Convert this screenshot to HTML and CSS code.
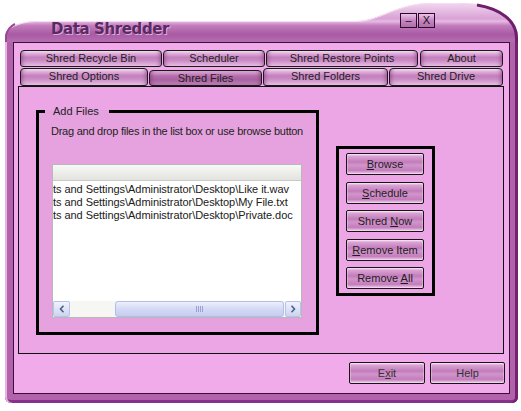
FILE: index.html
```html
<!DOCTYPE html>
<html>
<head>
<meta charset="utf-8">
<title>Data Shredder</title>
<link rel="stylesheet" href="styles.css">
</head>
<body>
<div class="window">
  <div class="titlebar">
    <svg class="title-shape" width="513" height="42" viewBox="0 0 513 42">
      <defs>
        <linearGradient id="tg" x1="0" y1="3" x2="0" y2="42" gradientUnits="userSpaceOnUse">
          <stop offset="0" stop-color="#f2d6f0"/>
          <stop offset="0.4" stop-color="#d9a2d5"/>
          <stop offset="0.47" stop-color="#e7b9e3"/>
          <stop offset="0.58" stop-color="#c27cbc"/>
          <stop offset="0.8" stop-color="#a95aa4"/>
          <stop offset="1" stop-color="#b56eb0"/>
        </linearGradient>
      </defs>
      <path d="M0,42 L0,37 C0,28 14,21 34,21 L352,21 C374,21 392,3 426,3 L456,3 C490,3 513,16 513,38 L513,42 Z" fill="url(#tg)"/>
      <path d="M0.5,37 C0.5,28 14,21.5 34,21.5 L352,21.5 C374,21.5 392,3.5 426,3.5 L456,3.5" fill="none" stroke="#f6dcf4" stroke-width="1"/>
      <path d="M472,5 C496,9 511.5,21 511.5,38 L511.5,42" fill="none" stroke="#6e1f6c" stroke-width="3"/>
      <path d="M1,42 L1,36 C2,30 6,26 10,24" fill="none" stroke="#9a4896" stroke-width="2"/>
    </svg>
    <div class="title">Data Shredder</div>
    <div class="title-btns">
      <span class="tbtn">–</span>
      <span class="tbtn">X</span>
    </div>
  </div>
  <div class="frame">
    <div class="client">
      <div class="tabs">
        <div class="tabrow row1">
          <div class="tab t-recycle">Shred Recycle Bin</div>
          <div class="tab t-scheduler">Scheduler</div>
          <div class="tab t-restore">Shred Restore Points</div>
          <div class="tab t-about">About</div>
        </div>
        <div class="tabrow row2">
          <div class="tab t-options">Shred Options</div>
          <div class="tab t-files active">Shred Files</div>
          <div class="tab t-folders">Shred Folders</div>
          <div class="tab t-drive">Shred Drive</div>
        </div>
      </div>
      <div class="panel">
        <fieldset class="group">
          <legend>Add Files</legend>
          <p class="hint">Drag and drop files in the list box or use browse button</p>
          <div class="listbox">
            <div class="lb-header"></div>
            <div class="lb-rows">
              <div>ts and Settings\Administrator\Desktop\Like it.wav</div>
              <div>ts and Settings\Administrator\Desktop\My File.txt</div>
              <div>ts and Settings\Administrator\Desktop\Private.doc</div>
            </div>
            <div class="hscroll">
              <span class="sb-btn sb-left"><svg width="6" height="8" viewBox="0 0 6 8"><polyline points="4.5,0.8 1.5,4 4.5,7.2" fill="none" stroke="#4d6185" stroke-width="1.6"/></svg></span>
              <span class="sb-track"><span class="sb-thumb"><span class="grip"></span></span></span>
              <span class="sb-btn sb-right"><svg width="6" height="8" viewBox="0 0 6 8"><polyline points="1.5,0.8 4.5,4 1.5,7.2" fill="none" stroke="#4d6185" stroke-width="1.6"/></svg></span>
            </div>
          </div>
        </fieldset>
        <div class="actions">
          <button class="btn act"><u>B</u>rowse</button>
          <button class="btn act"><u>S</u>chedule</button>
          <button class="btn act">Shred <u>N</u>ow</button>
          <button class="btn act"><u>R</u>emove Item</button>
          <button class="btn act">Remove <u>A</u>ll</button>
        </div>
      </div>
      <div class="footer">
        <button class="btn exit">E<u>x</u>it</button>
        <button class="btn help">Help</button>
      </div>
    </div>
  </div>
</div>
</body>
</html>
```

FILE: styles.css
```css
html, body {
  margin: 0;
  padding: 0;
}
body {
  background: #ffffff;
  width: 521px;
  height: 411px;
  overflow: hidden;
  font-family: "Liberation Sans", Arial, sans-serif;
  font-size: 11px;
  color: #1e1e1e;
}

.window {
  width: 513px;
  margin-left: 5px;
}

/* ---------- title bar ---------- */
.titlebar {
  position: relative;
  height: 42px;
  display: flex;
  align-items: flex-start;
}
.title-shape {
  position: absolute;
  left: 0;
  top: 0;
}
.title {
  position: relative;
  margin: 20px 0 0 46px;
  font: bold 15px/18px "DejaVu Sans", Verdana, sans-serif;
  letter-spacing: -0.4px;
  color: #5a2a62;
  text-shadow: 1px 1px 0 rgba(245, 205, 245, 0.7);
}
.title-btns {
  position: relative;
  margin: 13px 83px 0 auto;
  display: flex;
  gap: 1px;
}
.tbtn {
  width: 17px;
  height: 15px;
  box-sizing: border-box;
  border: 1px solid #2a0c2a;
  background: linear-gradient(#ecc4e8, #c585c0 50%, #b26dac);
  display: flex;
  align-items: center;
  justify-content: center;
  font: 11px/1 "Liberation Sans", Arial, sans-serif;
  color: #111;
}

/* ---------- frame ---------- */
.frame {
  height: 361px;
  box-sizing: border-box;
  padding: 0 8px 9px 8px;
  background: #b262aa;
  box-shadow: inset 2px 0 #e8b2e2, inset -3px 0 #74246f, inset 0 -3px #86328a;
  border-radius: 0 0 6px 6px;
}
.client {
  height: 352px;
  box-sizing: border-box;
  border: 1px solid #3c0f3a;
  background: #f1aaea;
  padding: 7px 0 0 4px;
}

/* ---------- tabs ---------- */
.tabs {
  margin-left: 2px;
}
.tabrow {
  display: flex;
  gap: 1px;
}
.row1 {
  height: 17px;
  margin-bottom: 1px;
}
.row2 {
  height: 18px;
}
.tab {
  box-sizing: border-box;
  height: 100%;
  border: 1px solid #1a1a1a;
  border-radius: 4px 4px 3px 3px;
  background: linear-gradient(#fbeefa 0, #e3b2dd 15%, #c57fbf 42%, #c98ac3 62%, #dba8d6 85%, #efcdeb 100%);
  box-shadow: inset 4px 0 4px -3px rgba(110, 30, 100, 0.55), inset -4px 0 4px -3px rgba(110, 30, 100, 0.55);
  text-align: center;
  line-height: 15px;
  white-space: nowrap;
}
.tab.active {
  margin-top: 2px;
  height: 16px;
  background: linear-gradient(#e2b2dc, #b66cae 35%, #aa62a1 62%, #bf80b7 100%);
}
.t-recycle { width: 142px; }
.t-scheduler { width: 102px; }
.t-restore { width: 152px; }
.t-about { width: 83px; margin-left: 1px; }
.t-options { width: 128px; }
.t-files { width: 113px; }
.t-folders { width: 125px; }
.t-drive { width: 114px; }

/* ---------- panel ---------- */
.panel {
  box-sizing: border-box;
  width: 486px;
  height: 268px;
  border: 1px solid #111;
  background: #eca6e5;
  display: flex;
  align-items: flex-start;
  padding-left: 17px;
}
.group {
  box-sizing: border-box;
  margin: 18px 0 0 0;
  min-width: 0;
  width: 283px;
  height: 230px;
  border: 3px solid #000;
  padding: 7px 12px 0 12px;
  background: #e6a2de;
}
.group legend {
  margin-left: -6px;
  padding: 0 10px 0 8px;
  line-height: 13px;
  color: #222;
}
.hint {
  margin: 0;
  line-height: 13px;
  white-space: nowrap;
  letter-spacing: -0.25px;
  color: #222;
}

/* ---------- list box ---------- */
.listbox {
  box-sizing: border-box;
  width: 250px;
  height: 154px;
  margin: 26px 0 0 1px;
  border: 1px solid #b8b8b8;
  background: #fff;
  display: flex;
  flex-direction: column;
}
.lb-header {
  height: 16px;
  box-sizing: border-box;
  border-bottom: 1px solid #c9c9c9;
  background: linear-gradient(#f8f8f6, #e2e2de);
}
.lb-rows {
  flex: 1;
  padding-top: 2px;
  line-height: 13px;
  white-space: nowrap;
  overflow: hidden;
  letter-spacing: -0.05px;
  color: #202020;
}
.hscroll {
  height: 16px;
  display: flex;
  background: #f6f6f2;
}
.sb-btn {
  box-sizing: border-box;
  height: 16px;
  border: 1px solid #b9c3ea;
  border-radius: 2px;
  background: linear-gradient(#f0f2fd, #cdd4f3);
  display: flex;
  align-items: center;
  justify-content: center;
}
.sb-left { width: 17px; }
.sb-right { width: 16px; }
.sb-track {
  flex: 1;
  display: flex;
}
.sb-thumb {
  box-sizing: border-box;
  margin-left: 45px;
  width: 169px;
  height: 16px;
  border: 1px solid #b4bce9;
  border-radius: 3px;
  background: linear-gradient(#eef0fc, #d4d9f5 50%, #c6ccf1);
  display: flex;
  align-items: center;
  justify-content: center;
}
.grip {
  width: 8px;
  height: 6px;
  background: repeating-linear-gradient(90deg, #98a2cf 0 1px, transparent 1px 2px);
}

/* ---------- buttons ---------- */
.btn {
  box-sizing: border-box;
  height: 22px;
  padding: 0;
  border: 1px solid #161616;
  border-radius: 2px;
  background: linear-gradient(#f6dff3 0, #d9a2d3 12%, #c37bbb 40%, #d295cb 55%, #c47dbd 82%, #f0d2ec 100%);
  box-shadow: inset 0 0 0 1px rgba(255, 235, 252, 0.35);
  font: 11px/20px "Liberation Sans", Arial, sans-serif;
  color: #1e1e1e;
  text-align: center;
}
.actions {
  box-sizing: border-box;
  margin: 59px 0 0 17px;
  width: 99px;
  border: 3px solid #000;
  padding: 4px 7px;
  display: flex;
  flex-direction: column;
  gap: 6.5px;
}
.act {
  width: 78px;
}
.footer {
  display: flex;
  justify-content: flex-end;
  gap: 5px;
  margin-top: 8px;
  padding-right: 4px;
}
.exit { width: 76px; color: #333; }
.help { width: 75px; color: #333; }
```
